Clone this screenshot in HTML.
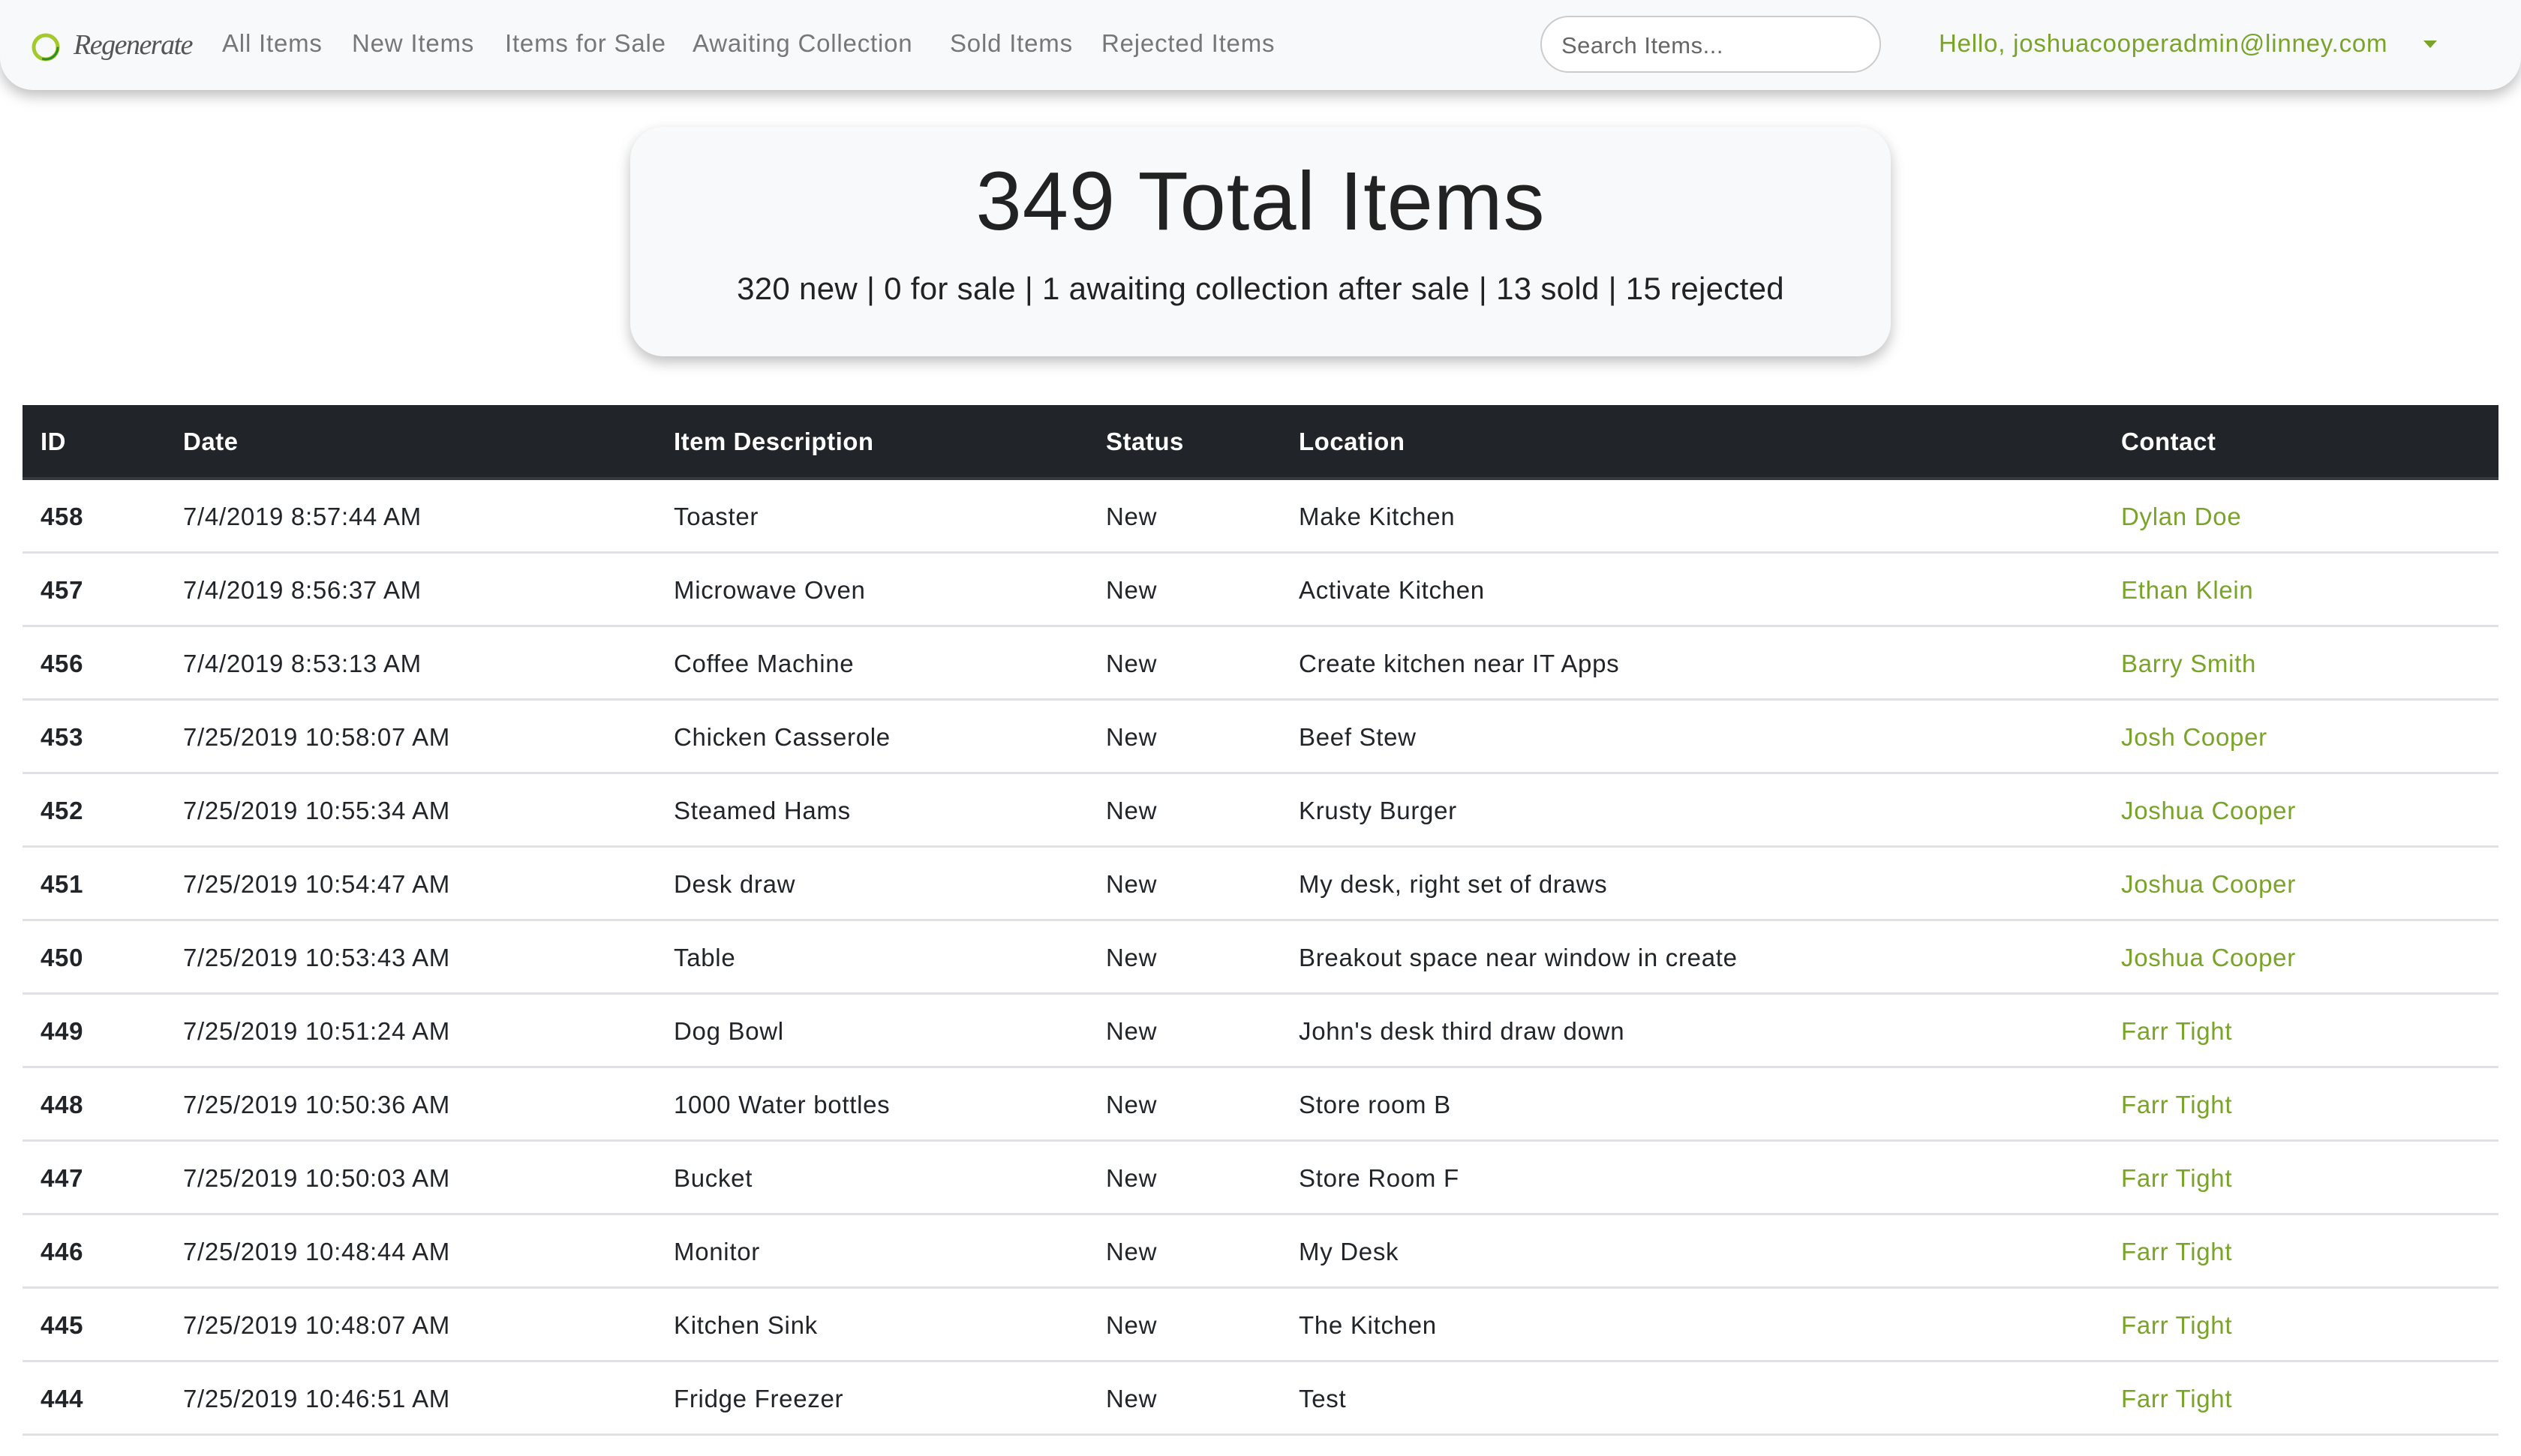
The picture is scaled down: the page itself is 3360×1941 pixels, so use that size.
<!DOCTYPE html>
<html><head><meta charset="utf-8"><style>
*{margin:0;padding:0;box-sizing:border-box}
body{width:3360px;height:1941px;background:#fff;font-family:"Liberation Sans",sans-serif;position:relative;overflow:hidden;color:#212529}
.nav{position:absolute;left:0;top:0;width:3360px;height:120px;background:#f8f9fa;border-radius:0 0 44px 44px;box-shadow:0 8px 18px rgba(0,0,0,.25)}
.nl{position:absolute;top:39px;font-size:33px;color:#777;white-space:nowrap;letter-spacing:0.8px}
.search{position:absolute;left:2053px;top:21px;width:454px;height:76px;border:2px solid #ccc;border-radius:38px;background:#fff;font-size:31px;color:#666;padding:20px 0 0 26px;letter-spacing:0.5px}
.hello{position:absolute;left:2584px;top:39px;font-size:33px;color:#7aa32a;white-space:nowrap;letter-spacing:0.8px}
.caret{position:absolute;left:3230px;top:54px;width:0;height:0;border-left:9px solid transparent;border-right:9px solid transparent;border-top:10px solid #7aa32a}
.card{position:absolute;left:840px;top:169px;width:1680px;height:306px;background:#f8f9fa;border-radius:44px;box-shadow:0 8px 18px rgba(0,0,0,.25);text-align:center}
.card h1{font-weight:normal;font-size:110px;color:#222;margin-top:40px;line-height:120px;letter-spacing:1px}
.card p{font-size:42px;color:#222;margin-top:32px;letter-spacing:0.3px}
.th{position:absolute;left:30px;top:540px;width:3300px;height:100px;background:#212529;border-bottom:4px solid #343a40}
.th span{position:absolute;top:30px;color:#fff;font-weight:bold;font-size:33px;letter-spacing:0.5px}
.row{position:absolute;left:30px;width:3300px;height:98px;border-bottom:3px solid #dee2e6}
.row span{position:absolute;top:30px;font-size:33px;white-space:nowrap;letter-spacing:0.7px}
.row span.b{font-weight:bold}
.row span.g{color:#7aa32a}
</style></head><body>
<div class="nav">
<svg style="position:absolute;left:40px;top:42px" width="42" height="42" viewBox="0 0 42 42"><circle cx="21" cy="21" r="16" fill="none" stroke="#a4c92a" stroke-width="5"/><circle cx="21" cy="21" r="16" fill="none" stroke="#2d8a2d" stroke-width="3" stroke-dasharray="30 70"/></svg>
<div style="position:absolute;left:98px;top:38px;font-family:'Liberation Serif',serif;font-style:italic;font-size:38px;color:#555;letter-spacing:-1.5px">Regenerate</div>
<div class="nl" style="left:296px">All Items</div>
<div class="nl" style="left:469px">New Items</div>
<div class="nl" style="left:673px">Items for Sale</div>
<div class="nl" style="left:923px">Awaiting Collection</div>
<div class="nl" style="left:1266px">Sold Items</div>
<div class="nl" style="left:1468px">Rejected Items</div>
<div class="search">Search Items...</div>
<div class="hello">Hello, joshuacooperadmin@linney.com</div>
<div class="caret"></div>
</div>
<div class="card"><h1>349 Total Items</h1><p>320 new | 0 for sale | 1 awaiting collection after sale | 13 sold | 15 rejected</p></div>
<div class="th"><span style="left:24px">ID</span><span style="left:214px">Date</span><span style="left:868px">Item Description</span><span style="left:1444px">Status</span><span style="left:1701px">Location</span><span style="left:2797px">Contact</span></div>
<div class="row" style="top:640px"><span class="b" style="left:24px">458</span><span style="left:214px">7/4/2019 8:57:44 AM</span><span style="left:868px">Toaster</span><span style="left:1444px">New</span><span style="left:1701px">Make Kitchen</span><span class="g" style="left:2797px">Dylan Doe</span></div>
<div class="row" style="top:738px"><span class="b" style="left:24px">457</span><span style="left:214px">7/4/2019 8:56:37 AM</span><span style="left:868px">Microwave Oven</span><span style="left:1444px">New</span><span style="left:1701px">Activate Kitchen</span><span class="g" style="left:2797px">Ethan Klein</span></div>
<div class="row" style="top:836px"><span class="b" style="left:24px">456</span><span style="left:214px">7/4/2019 8:53:13 AM</span><span style="left:868px">Coffee Machine</span><span style="left:1444px">New</span><span style="left:1701px">Create kitchen near IT Apps</span><span class="g" style="left:2797px">Barry Smith</span></div>
<div class="row" style="top:934px"><span class="b" style="left:24px">453</span><span style="left:214px">7/25/2019 10:58:07 AM</span><span style="left:868px">Chicken Casserole</span><span style="left:1444px">New</span><span style="left:1701px">Beef Stew</span><span class="g" style="left:2797px">Josh Cooper</span></div>
<div class="row" style="top:1032px"><span class="b" style="left:24px">452</span><span style="left:214px">7/25/2019 10:55:34 AM</span><span style="left:868px">Steamed Hams</span><span style="left:1444px">New</span><span style="left:1701px">Krusty Burger</span><span class="g" style="left:2797px">Joshua Cooper</span></div>
<div class="row" style="top:1130px"><span class="b" style="left:24px">451</span><span style="left:214px">7/25/2019 10:54:47 AM</span><span style="left:868px">Desk draw</span><span style="left:1444px">New</span><span style="left:1701px">My desk, right set of draws</span><span class="g" style="left:2797px">Joshua Cooper</span></div>
<div class="row" style="top:1228px"><span class="b" style="left:24px">450</span><span style="left:214px">7/25/2019 10:53:43 AM</span><span style="left:868px">Table</span><span style="left:1444px">New</span><span style="left:1701px">Breakout space near window in create</span><span class="g" style="left:2797px">Joshua Cooper</span></div>
<div class="row" style="top:1326px"><span class="b" style="left:24px">449</span><span style="left:214px">7/25/2019 10:51:24 AM</span><span style="left:868px">Dog Bowl</span><span style="left:1444px">New</span><span style="left:1701px">John's desk third draw down</span><span class="g" style="left:2797px">Farr Tight</span></div>
<div class="row" style="top:1424px"><span class="b" style="left:24px">448</span><span style="left:214px">7/25/2019 10:50:36 AM</span><span style="left:868px">1000 Water bottles</span><span style="left:1444px">New</span><span style="left:1701px">Store room B</span><span class="g" style="left:2797px">Farr Tight</span></div>
<div class="row" style="top:1522px"><span class="b" style="left:24px">447</span><span style="left:214px">7/25/2019 10:50:03 AM</span><span style="left:868px">Bucket</span><span style="left:1444px">New</span><span style="left:1701px">Store Room F</span><span class="g" style="left:2797px">Farr Tight</span></div>
<div class="row" style="top:1620px"><span class="b" style="left:24px">446</span><span style="left:214px">7/25/2019 10:48:44 AM</span><span style="left:868px">Monitor</span><span style="left:1444px">New</span><span style="left:1701px">My Desk</span><span class="g" style="left:2797px">Farr Tight</span></div>
<div class="row" style="top:1718px"><span class="b" style="left:24px">445</span><span style="left:214px">7/25/2019 10:48:07 AM</span><span style="left:868px">Kitchen Sink</span><span style="left:1444px">New</span><span style="left:1701px">The Kitchen</span><span class="g" style="left:2797px">Farr Tight</span></div>
<div class="row" style="top:1816px"><span class="b" style="left:24px">444</span><span style="left:214px">7/25/2019 10:46:51 AM</span><span style="left:868px">Fridge Freezer</span><span style="left:1444px">New</span><span style="left:1701px">Test</span><span class="g" style="left:2797px">Farr Tight</span></div>
</body></html>
